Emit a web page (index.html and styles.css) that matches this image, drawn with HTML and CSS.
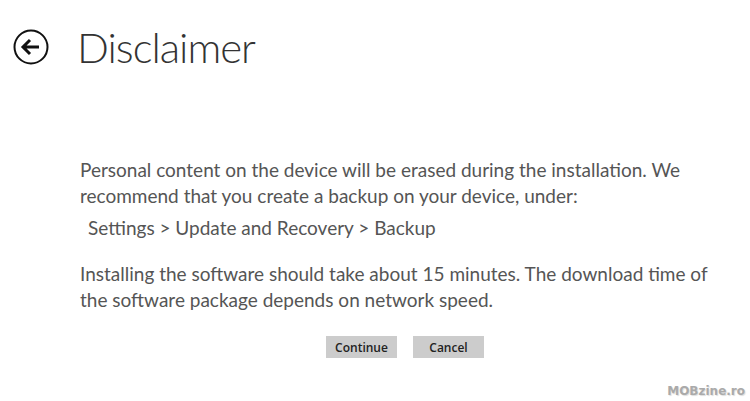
FILE: index.html
```html
<!DOCTYPE html>
<html lang="en">
<head>
  <meta charset="UTF-8" />
  <title>Disclaimer</title>
  <link rel="stylesheet" href="styles.css">
</head>
<body>
  <div class="header">
    <button class="back" aria-label="Back">
      <svg width="36" height="36" viewBox="0 0 36 36">
        <circle cx="18" cy="18" r="16.5" fill="none" stroke="#111" stroke-width="2"/>
        <path d="M10 18 H26 M17 11 L10 18 L17 25" fill="none" stroke="#111" stroke-width="3" stroke-linejoin="miter"/>
      </svg>
    </button>
    <h1>Disclaimer</h1>
  </div>

  <div class="content">
    <p>Personal content on the device will be erased during the installation. We<br>recommend that you create a backup on your device, under:</p>
    <p class="path">Settings &gt; Update and Recovery &gt; Backup</p>
    <p>Installing the software should take about 15 minutes. The download time of<br>the software package depends on network speed.</p>
    <div class="actions">
      <button class="btn">Continue</button>
      <button class="btn">Cancel</button>
    </div>
  </div>

  <div class="mark">MOBzine.ro</div>
</body>
</html>
```

FILE: styles.css
```css
body {
  margin: 0;
  background: white;
  color: #555;
  font-family: Lato, "Open Sans", sans-serif;
  height: 401px;
  position: relative;
  overflow: hidden;
}

.header {
  display: flex;
  align-items: center;
  padding: 29px 0 0 13px;
  height: 36px;
}

.back {
  width: 36px;
  height: 36px;
  padding: 0;
  border: none;
  background: none;
  display: flex;
}

h1 {
  margin: 0 0 0 28px;
  font-weight: 300;
  font-size: 42px;
  letter-spacing: -1px;
  color: #333;
  line-height: 36px;
}

.content {
  padding: 92px 0 0 80px;
  width: 650px;
}

.content p {
  margin: 0;
  font-size: 19px;
  line-height: 26px;
  white-space: nowrap;
}

.path {
  padding: 6px 0 0 8px;
}

.path + p {
  padding-top: 20px;
}

.actions {
  display: flex;
  justify-content: center;
  gap: 16px;
  padding: 23px 0 0 0;
}

.btn {
  width: 71px;
  height: 22px;
  border: none;
  background: #cccccc;
  color: #222;
  font-family: "Open Sans", sans-serif;
  font-size: 12px;
  font-weight: 600;
  padding: 0;
}

.mark {
  position: absolute;
  right: 5px;
  bottom: 3px;
  font-family: "DejaVu Sans", sans-serif;
  font-weight: bold;
  font-size: 12px;
  color: #aaa;
  text-shadow: 1px 1px 1px #ddd;
}
```
